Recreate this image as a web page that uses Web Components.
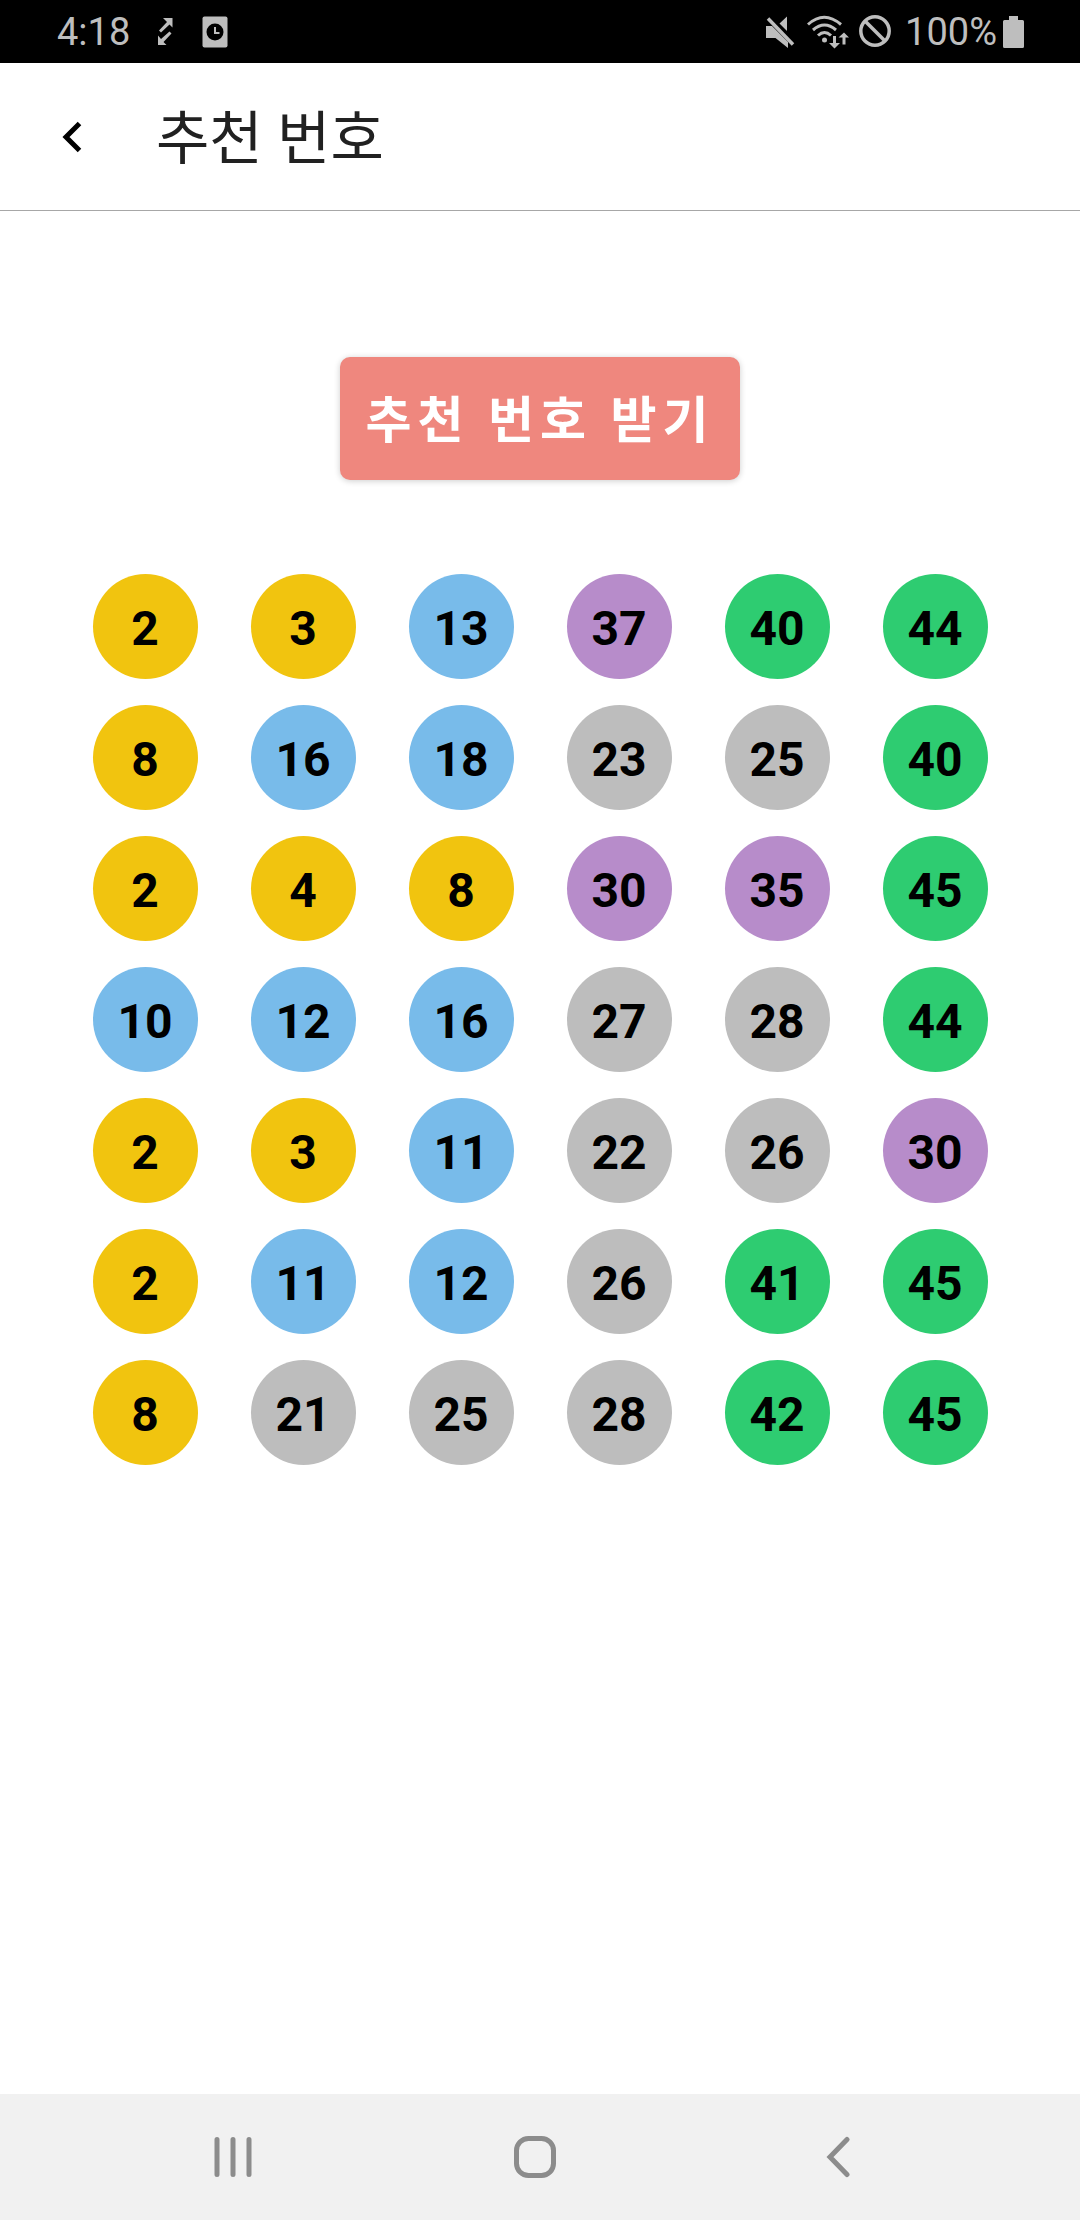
<!DOCTYPE html>
<html lang="ko">
<head>
<meta charset="utf-8">
<meta name="viewport" content="width=device-width, initial-scale=1">
<title>추천 번호</title>
<style>
  body { margin: 0; background: #fff; font-family: Roboto, "Noto Sans CJK KR", sans-serif; }
</style>
</head>
<body>
<lotto-screen></lotto-screen>

<template id="status-bar">
  <style>
    :host { display: flex; align-items: center; justify-content: space-between; box-sizing: border-box; height: 63px; padding: 0 56px 0 57px; background: #000; color: #bebebe; font-size: 38px; line-height: 64px; }
    div { display: flex; align-items: center; }
    svg { display: block; fill: currentColor; }
    .left { gap: 28px; }
    .right { gap: 9px; }
    .charge { display: flex; align-items: center; gap: 6px; margin-left: 4px; }
  </style>
  <div class="left">
    <span>4:18</span>
    <svg width="16" height="28" viewBox="0 0 16 28" aria-hidden="true"><path d="M5 0H14.500V9.500L11.500 6.500 3 14.500 1 12.500 9 4Z"/><path d="M11.500 13.500L13.500 15.500 5.500 24 8.500 27H0V17.500L3 21Z"/></svg>
    <svg width="26" height="32" viewBox="0 0 26 32" aria-hidden="true"><rect x="0.500" y="0.500" width="25" height="31" rx="2"/><circle cx="13" cy="16" r="8.500" fill="#000"/><path d="M13 11V17H17.500" fill="none" stroke="currentColor" stroke-width="2"/></svg>
  </div>
  <div class="right">
    <svg width="32" height="34" viewBox="0 0 32 34" aria-hidden="true"><path d="M0 11H6L22 27V33L9.500 23H0Z"/><path d="M21 1.500V16L13.500 8.500Z"/><path d="M2 3.500L27 29.500" fill="none" stroke="currentColor" stroke-width="3.500"/></svg>
    <svg width="42" height="34" viewBox="0 0 42 34" aria-hidden="true"><g fill="none" stroke="currentColor" stroke-width="3"><path d="M1 9.500Q17-5 34 9.500"/><path d="M6 15Q17.500 5 29 15"/><path d="M11 20.500Q17.500 14.500 24 20.500"/></g><circle cx="17.500" cy="25" r="2.500"/><path d="M26 21h3v7h4l-5.500 5.500L22 28h4zM35.500 29.500h3v-7h3.500L37 17.500 31.500 22.500h4z"/></svg>
    <svg width="34" height="34" viewBox="0 0 34 34" aria-hidden="true"><g fill="none" stroke="currentColor" stroke-width="3.500"><circle cx="17" cy="16" r="14.200"/><path d="M7 6L27 26"/></g></svg>
    <span class="charge"><span>100%</span>
    <svg width="21" height="32" viewBox="0 0 21 32" aria-hidden="true"><path d="M6 0H15V4H19.500Q21 4 21 5.500V30.500Q21 32 19.500 32H1.500Q0 32 0 30.500V5.500Q0 4 1.500 4H6Z"/></svg></span>
  </div>
</template>

<template id="title-bar">
  <style>
    :host { display: flex; align-items: center; box-sizing: border-box; height: 148px; padding: 0 40px; border-bottom: 1px solid #a7a7a7; }
    button { display: grid; place-items: center; width: 63px; height: 63px; margin: 0; padding: 0; border: 0; background: none; color: #000; }
    h1 { margin: 0 0 0 53px; padding-top: 4px; color: #212121; font-size: 58px; line-height: 84px; font-weight: 400; }
  </style>
  <button type="button" aria-label="뒤로">
    <svg width="20" height="32" viewBox="0 0 20 32" aria-hidden="true"><path d="M17.500 2.500L4 16 17.500 29.500" fill="none" stroke="currentColor" stroke-width="5"/></svg>
  </button>
  <h1><slot></slot></h1>
</template>

<template id="draw-button">
  <style>
    :host { display: block; }
    button { display: block; margin: 0; padding: 6px 26px 0; border: 0; border-radius: 10px; background: #ef877e; box-shadow: 0 1px 6px rgba(0, 0, 0, .2); color: #fff; font: bold 50px/117px Roboto, "Noto Sans CJK KR", sans-serif; letter-spacing: 6px; }
  </style>
  <button type="button"><slot></slot></button>
</template>

<template id="lotto-ball">
  <style>
    :host { display: grid; place-items: center; box-sizing: border-box; width: 105px; height: 105px; padding-top: 4px; border-radius: 50%; background: var(--ball); color: #000; font-size: 48px; line-height: 56px; font-weight: bold; }
  </style>
  <slot></slot>
</template>

<template id="lotto-row">
  <style>
    :host { display: grid; grid-template-columns: repeat(6, 1fr); justify-items: center; }
  </style>
</template>

<template id="nav-bar">
  <style>
    nav { display: flex; height: 126px; padding: 0 91px 0 82px; background: #f1f1f1; }
    :host { display: block; }
    button { flex: 1; display: grid; place-items: center; margin: 0; padding: 0; border: 0; background: none; color: #8c8c8c; }
    svg { display: block; fill: none; stroke: currentColor; stroke-width: 5; stroke-linecap: round; }
  </style>
  <nav>
    <button type="button" aria-label="최근 앱"><svg width="38" height="42" viewBox="0 0 38 42"><path d="M3 3.500V38.500M19 3.500V38.500M35 3.500V38.500"/></svg></button>
    <button type="button" aria-label="홈"><svg width="42" height="42" viewBox="0 0 42 42"><rect x="2.500" y="2.500" width="37" height="37" rx="12"/></svg></button>
    <button type="button" aria-label="뒤로"><svg width="24" height="42" viewBox="0 0 24 42"><path d="M21 3.500L4 21 21 38.500"/></svg></button>
  </nav>
</template>

<template id="lotto-screen">
  <style>
    :host { display: flex; flex-direction: column; min-height: 100vh; }
    main { flex: 1; display: flex; flex-direction: column; align-items: center; gap: 94px; padding: 146px 66px 66px; }
    section { display: flex; flex-direction: column; gap: 26px; align-self: stretch; }
  </style>
  <status-bar></status-bar>
  <title-bar>추천 번호</title-bar>
  <main>
    <draw-button>추천 번호 받기</draw-button>
    <section>
      <lotto-row numbers="2 3 13 37 40 44"></lotto-row>
      <lotto-row numbers="8 16 18 23 25 40"></lotto-row>
      <lotto-row numbers="2 4 8 30 35 45"></lotto-row>
      <lotto-row numbers="10 12 16 27 28 44"></lotto-row>
      <lotto-row numbers="2 3 11 22 26 30"></lotto-row>
      <lotto-row numbers="2 11 12 26 41 45"></lotto-row>
      <lotto-row numbers="8 21 25 28 42 45"></lotto-row>
    </section>
  </main>
  <nav-bar></nav-bar>
</template>

<script>
  class TemplateElement extends HTMLElement {
    constructor() {
      super();
      const template = document.getElementById(this.localName);
      this.attachShadow({ mode: 'open' }).append(template.content.cloneNode(true));
    }
  }

  // Ball colours by tens: 1-9, 10-19, 20-29, 30-39, 40-45.
  const BALL_COLOURS = ['#f1c40f', '#78bbea', '#bdbdbd', '#b78cca', '#2ecc71'];

  customElements.define('status-bar', class extends TemplateElement {});
  customElements.define('title-bar', class extends TemplateElement {});
  customElements.define('draw-button', class extends TemplateElement {});
  customElements.define('nav-bar', class extends TemplateElement {});

  customElements.define('lotto-ball', class extends TemplateElement {
    connectedCallback() {
      const tens = Math.floor(Number(this.textContent) / 10);
      this.style.setProperty('--ball', BALL_COLOURS[tens]);
    }
  });

  customElements.define('lotto-row', class extends TemplateElement {
    connectedCallback() {
      for (const number of this.getAttribute('numbers').split(' ')) {
        const ball = document.createElement('lotto-ball');
        ball.textContent = number;
        this.shadowRoot.append(ball);
      }
    }
  });

  customElements.define('lotto-screen', class extends TemplateElement {});
</script>
</body>
</html>
